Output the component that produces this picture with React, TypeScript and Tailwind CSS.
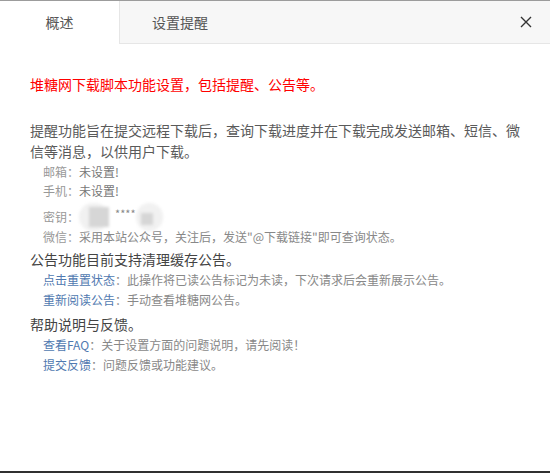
import React from "react";

const font = { fontFamily: '"Noto Sans CJK SC", "Noto Sans", sans-serif' };

function Blob({ w, inner }: { w: number; inner: { l: number; t: number; s: number } }) {
  return (
    <div className="relative h-[28px] shrink-0 rounded-full bg-[#f1f1f1] blur-[1.5px]" style={{ width: w }}>
      <div
        className="absolute bg-[#d6d6d6]"
        style={{ left: inner.l, top: inner.t, width: inner.s, height: inner.s }}
      />
    </div>
  );
}

export default function App() {
  return (
    <div className="flex h-[473px] w-[550px] flex-col bg-white border-t border-[#9c9c9c]" style={font}>
      <div className="flex h-[43px] shrink-0">
        <div className="flex w-[120px] items-center justify-center border-r border-[#e6e6e6] bg-white text-[14px] text-[#555]">
          概述
        </div>
        <div className="flex flex-1 items-center border-b border-[#e6e6e6] bg-[#f7f7f7]">
          <div className="flex w-[120px] items-center justify-center text-[14px] text-[#555]">设置提醒</div>
          <div className="flex-1" />
          <button className="mr-[14px] flex h-[20px] w-[20px] items-center justify-center">
            <svg width="12" height="12" viewBox="0 0 12 12">
              <path d="M1 1L11 11M11 1L1 11" stroke="#333" strokeWidth="1.4" />
            </svg>
          </button>
        </div>
      </div>

      <div className="flex-1 px-[30px] pt-[30px]">
        <div className="text-[14px] leading-[21px] text-[#ff0000]">堆糖网下载脚本功能设置，包括提醒、公告等。</div>

        <div className="mt-[25px] text-[14px] leading-[21px] text-[#5a5a5a]">
          提醒功能旨在提交远程下载后，查询下载进度并在下载完成发送邮箱、短信、微信等消息，以供用户下载。
        </div>
        <div className="pl-[13px] text-[12px] leading-[19px]">
          <div>
            <span className="text-[#999]">邮箱：</span>
            <span className="text-[#777]">未设置!</span>
          </div>
          <div>
            <span className="text-[#999]">手机：</span>
            <span className="text-[#777]">未设置!</span>
          </div>
          <div className="flex h-[27px] items-start">
            <span className="mt-[7px] text-[#999]">密钥：</span>
            <div className="mt-[3px] flex items-start">
              <Blob w={30} inner={{ l: 10, t: 4, s: 20 }} />
              <span className="ml-[6px] mt-[3px] text-[11px] leading-[14px] text-[#888]">****</span>
              <Blob w={27} inner={{ l: 5, t: 10, s: 12 }} />
            </div>
          </div>
          <div>
            <span className="text-[#999]">微信：</span>
            <span className="text-[#888]">采用本站公众号，关注后，发送"@下载链接"即可查询状态。</span>
          </div>
        </div>

        <div className="mt-[3px] text-[14px] leading-[21px] text-[#444]">公告功能目前支持清理缓存公告。</div>
        <div className="pl-[13px] text-[12px] leading-[20px]">
          <div>
            <span className="text-[#5079b0]">点击重置状态</span>
            <span className="text-[#888]">：此操作将已读公告标记为未读，下次请求后会重新展示公告。</span>
          </div>
          <div>
            <span className="text-[#5079b0]">重新阅读公告</span>
            <span className="text-[#888]">：手动查看堆糖网公告。</span>
          </div>
        </div>

        <div className="mt-[4px] text-[14px] leading-[21px] text-[#444]">帮助说明与反馈。</div>
        <div className="pl-[13px] text-[12px] leading-[20px]">
          <div>
            <span className="text-[#5079b0]">查看FAQ</span>
            <span className="text-[#888]">：关于设置方面的问题说明，请先阅读！</span>
          </div>
          <div>
            <span className="text-[#5079b0]">提交反馈</span>
            <span className="text-[#888]">：问题反馈或功能建议。</span>
          </div>
        </div>
      </div>

      <div className="h-[2px] shrink-0 bg-[#303030]" />
    </div>
  );
}
